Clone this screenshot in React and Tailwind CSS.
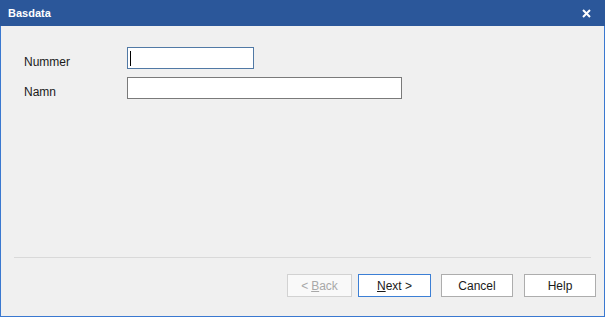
import React from "react";

function Field({ label, width, focused, top }) {
  return (
    <div className={`flex items-start ${top}`}>
      <span className="w-[103px] pt-[8px] text-[12px] leading-[14px] text-[#1a1a1a]">
        {label}
      </span>
      <div
        className={`h-[22px] bg-white border flex items-center ${width} ${
          focused ? "border-[#5179a5]" : "border-[#7a7a7a]"
        }`}
      >
        {focused && <div className="ml-[2px] w-[1px] h-[15px] bg-black" />}
      </div>
    </div>
  );
}

function Button({ children, w, disabled, primary }) {
  return (
    <button
      className={`h-[23px] ${w} text-[12px] border flex items-center justify-center ${
        disabled
          ? "bg-[#f9f9f9] border-[#d2d2d2] text-[#a8a8a8]"
          : primary
          ? "bg-white border-[#3c7fd5] text-[#1a1a1a]"
          : "bg-white border-[#adadad] text-[#1a1a1a]"
      }`}
    >
      {children}
    </button>
  );
}

export default function App() {
  return (
    <div
      className="w-[605px] h-[317px] flex flex-col bg-[#f0f0f0] border-x border-b border-[#3a78d0]"
      style={{ fontFamily: '"Liberation Sans", Arial, sans-serif' }}
    >
      <div className="h-[26px] -mx-px bg-[#2b579a] flex items-center justify-between pl-[8px] pr-[14px]">
        <span className="text-white text-[11px] font-bold">Basdata</span>
        <svg width="9" height="9" viewBox="0 0 9 9">
          <path d="M1 1L8 8M8 1L1 8" stroke="white" strokeWidth="2" />
        </svg>
      </div>

      <div className="flex flex-col pl-[23px] pt-[21px]">
        <Field label="Nummer" width="w-[127px]" focused />
        <Field label="Namn" width="w-[275px]" top="mt-[8px]" />
      </div>

      <div className="flex-1" />

      <div className="mx-[13px] border-t border-[#d9d9d9] mb-[16px]" />

      <div className="flex justify-end pr-[8px] mb-[19px]">
        <Button w="w-[65px]" disabled>
          &lt; <span className="underline ml-[3px]">B</span>ack
        </Button>
        <Button w="w-[73px] ml-[6px]" primary>
          <span className="underline">N</span>ext &gt;
        </Button>
        <Button w="w-[72px] ml-[10px]">Cancel</Button>
        <Button w="w-[72px] ml-[11px]">Help</Button>
      </div>
    </div>
  );
}
